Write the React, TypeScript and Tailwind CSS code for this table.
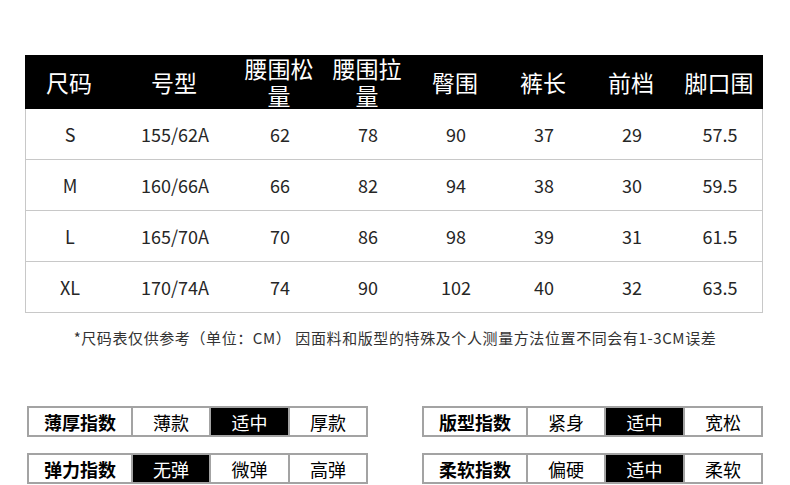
const HEAD = ["尺码", "号型", "腰围松量", "腰围拉量", "臀围", "裤长", "前档", "脚口围"];

const ROWS = [
  ["S", "155/62A", "62", "78", "90", "37", "29", "57.5"],
  ["M", "160/66A", "66", "82", "94", "38", "30", "59.5"],
  ["L", "165/70A", "70", "86", "98", "39", "31", "61.5"],
  ["XL", "170/74A", "74", "90", "102", "40", "32", "63.5"],
];

const INDEX = [
  [
    { label: "薄厚指数", options: ["薄款", "适中", "厚款"], active: 1 },
    { label: "弹力指数", options: ["无弹", "微弹", "高弹"], active: 0 },
  ],
  [
    { label: "版型指数", options: ["紧身", "适中", "宽松"], active: 1 },
    { label: "柔软指数", options: ["偏硬", "适中", "柔软"], active: 1 },
  ],
];

const cols = "grid grid-cols-[88px_122px_88px_88px_88px_88px_88px_88px]";

const IndexRow = ({ label, options, active }: { label: string; options: string[]; active: number }) => (
  <div className="grid h-[31px] w-[341px] grid-cols-[102px_78px_79px_78px] border-2 border-[#a3a3a3] text-[18px] leading-none">
    <div className="flex items-center justify-center font-bold text-black">{label}</div>
    {options.map((o, i) => (
      <div
        key={o + i}
        className={`flex items-center justify-center border-l-2 border-[#a3a3a3] ${
          i === active ? "bg-black text-white" : "text-black"
        }`}
      >
        {o}
      </div>
    ))}
  </div>
);

export default function App() {
  return (
    <div className="h-[485px] w-[790px] overflow-hidden bg-white pt-[55px] font-['Noto_Sans_CJK_SC',sans-serif]">
      <div className="ml-[25px] w-[738px]">
        <div className={`${cols} h-[54px] bg-black text-[23px] leading-[27px] text-white`}>
          {HEAD.map((h) => (
            <div key={h} className="flex items-center justify-center text-center">
              {h}
            </div>
          ))}
        </div>
        {ROWS.map((r) => (
          <div
            key={r[0]}
            className={`${cols} h-[51px] border-x border-b border-[#c8c8c8] text-[18px] text-[#262626]`}
          >
            {r.map((c, i) => (
              <div key={i} className="flex items-center justify-center">
                {c}
              </div>
            ))}
          </div>
        ))}
      </div>

      <p className="mt-[15px] text-center text-[15px] leading-[20px] tracking-[0.6px] text-[#333]">
        *尺码表仅供参考（单位：CM） 因面料和版型的特殊及个人测量方法位置不同会有1-3CM误差
      </p>

      <div className="mt-[58px] flex gap-[54px] pl-[27px]">
        {INDEX.map((group, gi) => (
          <div key={gi} className="flex flex-col gap-[16px]">
            {group.map((g) => (
              <IndexRow key={g.label} {...g} />
            ))}
          </div>
        ))}
      </div>
    </div>
  );
}
